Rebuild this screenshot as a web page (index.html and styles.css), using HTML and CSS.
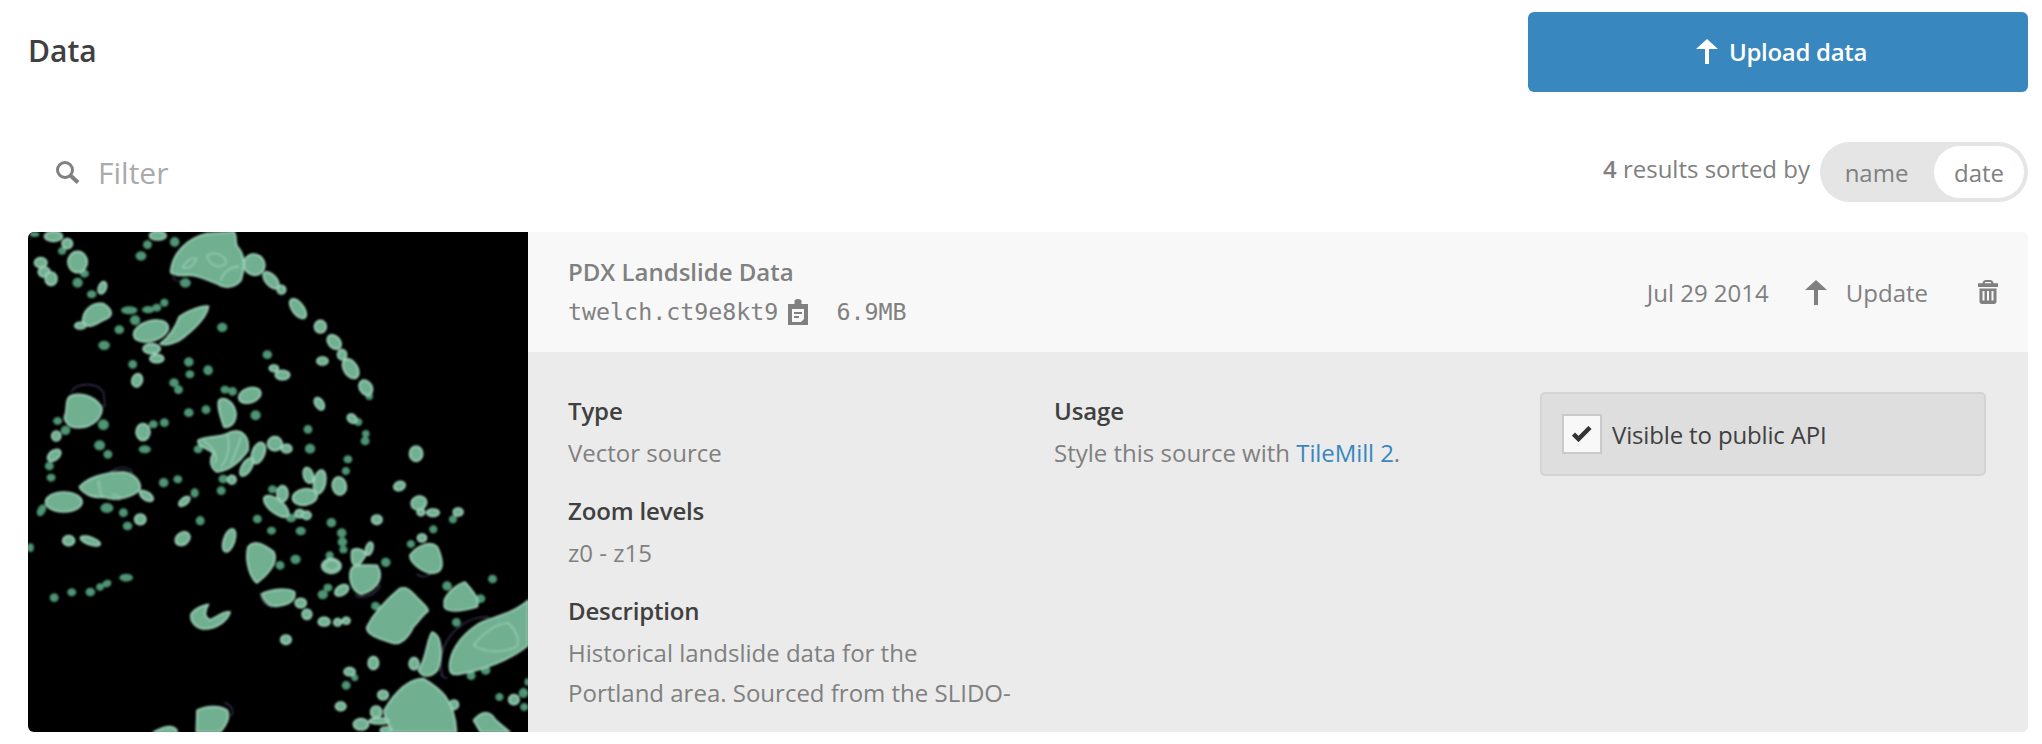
FILE: index.html
```html
<!DOCTYPE html>
<html>
<head>
  <meta http-equiv="content-type" content="text/html; charset=UTF-8">
  <link rel="stylesheet" href="styles.css">
  <title>Data</title>
</head>
<body>
  <div class="page">
    <div class="top">
      <h1 class="title">Data</h1>
      <a class="upload">
        <svg class="arrow-white" viewBox="0 0 22 25"><path d="M11 0 22 10H13V25H9V10H0Z"/></svg>
        Upload data
      </a>
    </div>

    <div class="bar">
      <div class="filter">
        <svg class="search" viewBox="0 0 24 23"><circle cx="9" cy="9" r="7.500"/><path class="handle" d="M14.500 14.500 22 21.500"/></svg>
        <span>Filter</span>
      </div>
      <div class="sort">
        <span class="count"><b>4</b> results sorted by</span>
        <div class="pill">
          <span class="pill-item">name</span>
          <span class="pill-item active">date</span>
        </div>
      </div>
    </div>

    <div class="source">
      <svg class="thumb" viewBox="81 5 1452 1500" preserveAspectRatio="none">
        <defs>
          <filter id="soft" x="-5%" y="-5%" width="110%" height="110%"><feGaussianBlur stdDeviation="2.400"/></filter>
        </defs>
        <rect class="thumb-bg" x="81" y="5" width="1452" height="1500"/>
        <g filter="url(#soft)">
          <g class="lines">
            <path d="M205 485C225 455 280 455 300 485L305 530"/>
            <path d="M320 725C340 710 370 705 385 725"/>
            <path d="M755 1090C760 1115 770 1128 790 1130"/>
            <path d="M1030 1095C1050 1110 1090 1095 1105 1065"/>
            <path d="M1210 1030C1220 1045 1245 1040 1255 1025"/>
            <path d="M1285 1340C1270 1280 1290 1220 1340 1185C1370 1160 1400 1160 1420 1160"/>
            <path d="M1300 1342C1290 1345 1285 1340 1280 1330"/>
            <path d="M650 1418C672 1420 682 1445 670 1458"/>
            <path d="M1065 1190C1090 1135 1130 1105 1165 1080"/>
            <path d="M500 140C510 155 530 155 545 150"/>
          </g>
          <g class="dots">
            <ellipse cx="100" cy="12" rx="12" ry="6"/><ellipse cx="180" cy="62" rx="10" ry="9"/><ellipse cx="225" cy="157" rx="13" ry="13"/>
            <ellipse cx="245" cy="130" rx="11" ry="10"/><ellipse cx="266" cy="192" rx="12" ry="10"/><ellipse cx="428" cy="43" rx="11" ry="11"/>
            <ellipse cx="409" cy="77" rx="14" ry="12"/><ellipse cx="507" cy="35" rx="12" ry="13"/><ellipse cx="538" cy="158" rx="14" ry="12"/>
            <ellipse cx="346" cy="298" rx="12" ry="11"/><ellipse cx="302" cy="345" rx="15" ry="12"/><ellipse cx="375" cy="240" rx="22" ry="10"/>
            <ellipse cx="392" cy="270" rx="13" ry="13"/><ellipse cx="430" cy="238" rx="16" ry="9"/><ellipse cx="455" cy="232" rx="11" ry="10"/>
            <ellipse cx="477" cy="217" rx="10" ry="10"/><ellipse cx="645" cy="291" rx="13" ry="12"/><ellipse cx="385" cy="402" rx="11" ry="11"/>
            <ellipse cx="548" cy="395" rx="12" ry="12"/><ellipse cx="551" cy="432" rx="11" ry="10"/><ellipse cx="604" cy="420" rx="12" ry="13"/>
            <ellipse cx="505" cy="457" rx="12" ry="11"/><ellipse cx="518" cy="478" rx="11" ry="11"/><ellipse cx="776" cy="373" rx="12" ry="11"/>
            <ellipse cx="653" cy="478" rx="11" ry="10"/><ellipse cx="675" cy="483" rx="11" ry="11"/><ellipse cx="548" cy="547" rx="12" ry="11"/>
            <ellipse cx="598" cy="538" rx="11" ry="11"/><ellipse cx="742" cy="555" rx="13" ry="13"/><ellipse cx="477" cy="577" rx="11" ry="11"/>
            <ellipse cx="445" cy="582" rx="11" ry="10"/><ellipse cx="420" cy="657" rx="16" ry="10"/><ellipse cx="313" cy="672" rx="11" ry="11"/>
            <ellipse cx="289" cy="645" rx="14" ry="13"/><ellipse cx="167" cy="572" rx="11" ry="10"/><ellipse cx="190" cy="600" rx="12" ry="12"/>
            <ellipse cx="300" cy="583" rx="14" ry="14"/><ellipse cx="143" cy="707" rx="11" ry="11"/><ellipse cx="148" cy="742" rx="11" ry="10"/>
            <ellipse cx="475" cy="757" rx="12" ry="12"/><ellipse cx="516" cy="747" rx="11" ry="10"/><ellipse cx="565" cy="788" rx="10" ry="12"/>
            <ellipse cx="575" cy="657" rx="11" ry="10"/><ellipse cx="648" cy="746" rx="12" ry="11"/><ellipse cx="642" cy="781" rx="11" ry="11"/>
            <ellipse cx="120" cy="840" rx="10" ry="17" transform="rotate(25 120 840)"/><ellipse cx="310" cy="833" rx="17" ry="13"/><ellipse cx="358" cy="847" rx="11" ry="11"/>
            <ellipse cx="370" cy="887" rx="12" ry="11"/><ellipse cx="581" cy="871" rx="11" ry="12"/><ellipse cx="747" cy="866" rx="11" ry="11"/>
            <ellipse cx="788" cy="901" rx="11" ry="10"/><ellipse cx="873" cy="902" rx="13" ry="11"/><ellipse cx="962" cy="877" rx="12" ry="12"/>
            <ellipse cx="791" cy="777" rx="11" ry="10"/><ellipse cx="845" cy="863" rx="13" ry="11"/><ellipse cx="894" cy="597" rx="11" ry="11"/>
            <ellipse cx="900" cy="655" rx="13" ry="13"/><ellipse cx="1010" cy="687" rx="11" ry="10"/><ellipse cx="1004" cy="722" rx="10" ry="10"/>
            <ellipse cx="1060" cy="632" rx="11" ry="11"/><ellipse cx="1062" cy="610" rx="9" ry="9"/><ellipse cx="1072" cy="498" rx="9" ry="9"/>
            <ellipse cx="1040" cy="575" rx="10" ry="10"/><ellipse cx="992" cy="908" rx="12" ry="12"/><ellipse cx="994" cy="935" rx="12" ry="12"/>
            <ellipse cx="997" cy="958" rx="10" ry="9"/><ellipse cx="957" cy="975" rx="10" ry="10"/><ellipse cx="813" cy="1005" rx="11" ry="11"/>
            <ellipse cx="858" cy="987" rx="13" ry="12"/><ellipse cx="1120" cy="996" rx="12" ry="12"/><ellipse cx="1193" cy="941" rx="10" ry="10"/>
            <ellipse cx="1258" cy="897" rx="10" ry="10"/><ellipse cx="1315" cy="867" rx="10" ry="10"/><ellipse cx="1430" cy="1046" rx="11" ry="11"/>
            <ellipse cx="1298" cy="1067" rx="12" ry="12"/><ellipse cx="1395" cy="1105" rx="12" ry="11"/><ellipse cx="1325" cy="1176" rx="11" ry="11"/>
            <ellipse cx="1090" cy="1127" rx="11" ry="11"/><ellipse cx="952" cy="1072" rx="11" ry="10"/><ellipse cx="937" cy="1093" rx="13" ry="12"/>
            <ellipse cx="157" cy="1102" rx="11" ry="11"/><ellipse cx="208" cy="1086" rx="11" ry="10"/><ellipse cx="262" cy="1085" rx="12" ry="11"/>
            <ellipse cx="290" cy="1070" rx="9" ry="9"/><ellipse cx="310" cy="1060" rx="12" ry="9" transform="rotate(-30 310 1060)"/><ellipse cx="366" cy="1042" rx="18" ry="10"/>
            <ellipse cx="88" cy="952" rx="8" ry="11"/><ellipse cx="1005" cy="1365" rx="11" ry="11"/><ellipse cx="1030" cy="1342" rx="8" ry="8"/>
            <ellipse cx="1450" cy="1400" rx="10" ry="10"/><ellipse cx="1520" cy="1388" rx="12" ry="13"/><ellipse cx="1522" cy="1430" rx="10" ry="10"/>
            <ellipse cx="1368" cy="1336" rx="11" ry="11"/><ellipse cx="1410" cy="1320" rx="12" ry="11"/><ellipse cx="1530" cy="1355" rx="5" ry="9"/>
          </g>
          <g class="blobs">
            <ellipse cx="155" cy="18" rx="26" ry="15"/><ellipse cx="195" cy="40" rx="15" ry="15"/><ellipse cx="225" cy="95" rx="28" ry="32"/>
            <ellipse cx="118" cy="97" rx="18" ry="15"/><ellipse cx="128" cy="125" rx="17" ry="15"/><ellipse cx="148" cy="145" rx="17" ry="20"/>
            <ellipse cx="458" cy="16" rx="24" ry="13"/><ellipse cx="297" cy="172" rx="11" ry="19" transform="rotate(20 297 172)"/>
            <path d="M495 125C500 70 540 25 600 10L680 5C690 25 680 40 690 50C710 70 712 110 700 150C680 175 650 175 630 160C600 150 570 130 540 135C520 135 500 135 495 125Z"/>
            <ellipse cx="738" cy="103" rx="30" ry="32" transform="rotate(-30 738 103)"/><ellipse cx="787" cy="150" rx="30" ry="16" transform="rotate(50 787 150)"/><ellipse cx="817" cy="178" rx="12" ry="13"/>
            <ellipse cx="865" cy="235" rx="34" ry="17" transform="rotate(55 865 235)"/><ellipse cx="930" cy="289" rx="17" ry="19"/><ellipse cx="970" cy="335" rx="24" ry="17" transform="rotate(50 970 335)"/>
            <ellipse cx="993" cy="373" rx="13" ry="15"/><ellipse cx="936" cy="392" rx="16" ry="12"/><ellipse cx="1018" cy="415" rx="32" ry="20" transform="rotate(60 1018 415)"/>
            <ellipse cx="1062" cy="472" rx="24" ry="18" transform="rotate(60 1062 472)"/><ellipse cx="927" cy="520" rx="20" ry="12" transform="rotate(60 927 520)"/><ellipse cx="1022" cy="565" rx="15" ry="12" transform="rotate(45 1022 565)"/>
            <path d="M240 265C245 235 270 215 300 220C325 235 330 255 310 265C290 270 270 295 250 285C240 280 238 275 240 265Z"/>
            <ellipse cx="233" cy="286" rx="16" ry="10"/>
            <ellipse cx="438" cy="302" rx="52" ry="30" transform="rotate(-18 438 302)"/>
            <path d="M465 340C490 320 510 290 520 260C545 240 590 225 605 228C600 260 570 290 540 315C520 335 480 350 465 340Z"/>
            <ellipse cx="440" cy="355" rx="25" ry="15"/><ellipse cx="455" cy="385" rx="20" ry="12"/><ellipse cx="398" cy="450" rx="15" ry="20" transform="rotate(15 398 450)"/>
            <ellipse cx="795" cy="414" rx="13" ry="10"/><ellipse cx="820" cy="434" rx="21" ry="14"/>
            <path d="M200 500C220 485 270 490 295 530C300 560 270 590 230 592C200 595 180 570 190 550C195 530 190 510 200 500Z"/>
            <ellipse cx="163" cy="617" rx="13" ry="15"/><ellipse cx="415" cy="605" rx="20" ry="25"/><ellipse cx="157" cy="675" rx="22" ry="14" transform="rotate(-40 157 675)"/>
            <path d="M635 510C650 495 680 515 685 550C685 580 665 595 650 590C640 560 630 530 635 510Z"/>
            <ellipse cx="725" cy="495" rx="33" ry="22" transform="rotate(-20 725 495)"/>
            <path d="M575 630C600 615 640 625 670 605C700 595 725 615 720 660C700 690 670 720 630 725C605 710 610 680 620 670C600 650 570 650 575 630Z"/>
            <ellipse cx="750" cy="668" rx="18" ry="33" transform="rotate(20 750 668)"/><ellipse cx="798" cy="640" rx="21" ry="21"/><ellipse cx="832" cy="655" rx="15" ry="13"/>
            <ellipse cx="716" cy="710" rx="14" ry="30" transform="rotate(30 716 710)"/><ellipse cx="673" cy="748" rx="12" ry="13"/>
            <ellipse cx="1208" cy="670" rx="19" ry="23"/><ellipse cx="1160" cy="767" rx="17" ry="13" transform="rotate(-25 1160 767)"/>
            <path d="M230 770C250 745 300 725 360 725C395 730 412 760 405 780C380 800 340 815 300 800C270 805 240 790 230 770Z"/>
            <ellipse cx="185" cy="815" rx="53" ry="30"/><ellipse cx="425" cy="797" rx="22" ry="12" transform="rotate(35 425 797)"/>
            <ellipse cx="535" cy="813" rx="19" ry="10" transform="rotate(-40 535 813)"/><ellipse cx="407" cy="867" rx="16" ry="16"/>
            <ellipse cx="199" cy="931" rx="17" ry="15"/><ellipse cx="262" cy="932" rx="30" ry="11" transform="rotate(20 262 932)"/>
            <ellipse cx="530" cy="925" rx="23" ry="18" transform="rotate(-40 530 925)"/><ellipse cx="665" cy="930" rx="16" ry="36" transform="rotate(18 665 930)"/>
            <ellipse cx="895" cy="735" rx="14" ry="24" transform="rotate(-15 895 735)"/><ellipse cx="928" cy="755" rx="17" ry="36" transform="rotate(10 928 755)"/>
            <ellipse cx="985" cy="767" rx="20" ry="27" transform="rotate(-10 985 767)"/><ellipse cx="885" cy="800" rx="36" ry="24" transform="rotate(-10 885 800)"/>
            <ellipse cx="820" cy="790" rx="16" ry="24"/><ellipse cx="802" cy="828" rx="44" ry="20" transform="rotate(40 802 828)"/><ellipse cx="870" cy="850" rx="14" ry="12"/><ellipse cx="890" cy="855" rx="13" ry="12"/>
            <ellipse cx="1216" cy="818" rx="23" ry="20" transform="rotate(-30 1216 818)"/><ellipse cx="1222" cy="846" rx="11" ry="10"/><ellipse cx="1257" cy="847" rx="18" ry="11"/>
            <ellipse cx="1330" cy="845" rx="14" ry="12"/><ellipse cx="1094" cy="868" rx="15" ry="14"/><ellipse cx="1225" cy="923" rx="13" ry="12"/>
            <path d="M720 950C740 925 770 945 795 965C810 1000 770 1040 745 1058C725 1040 710 990 720 950Z"/>
            <path d="M760 1090C790 1075 840 1072 855 1085C860 1110 840 1125 800 1128C780 1128 765 1110 760 1090Z"/>
            <ellipse cx="873" cy="1118" rx="16" ry="14"/><ellipse cx="891" cy="1152" rx="14" ry="15"/><ellipse cx="941" cy="1174" rx="17" ry="13"/><ellipse cx="980" cy="1176" rx="11" ry="11"/><ellipse cx="1005" cy="1171" rx="11" ry="10"/><ellipse cx="830" cy="1228" rx="15" ry="14"/>
            <path d="M555 1150C570 1130 590 1125 605 1122C595 1140 590 1160 610 1168C630 1160 650 1140 668 1145C660 1175 620 1200 585 1195C565 1190 550 1170 555 1150Z"/>
            <ellipse cx="962" cy="1007" rx="28" ry="22"/>
            <path d="M1022 960C1040 950 1060 960 1062 975C1050 995 1040 1010 1030 1005C1020 1000 1018 975 1022 960Z"/>
            <ellipse cx="1072" cy="955" rx="10" ry="20" transform="rotate(15 1072 955)"/>
            <path d="M1020 1015C1030 1000 1060 1005 1095 1005C1115 1040 1100 1075 1050 1092C1020 1085 1010 1040 1020 1015Z"/>
            <ellipse cx="992" cy="1080" rx="22" ry="14" transform="rotate(-35 992 1080)"/>
            <path d="M1065 1190C1085 1150 1125 1105 1160 1075C1180 1065 1195 1085 1205 1095C1220 1115 1245 1130 1243 1142C1225 1155 1215 1175 1200 1190C1185 1225 1160 1245 1140 1238C1110 1228 1060 1215 1065 1190Z"/>
            <path d="M1190 975C1210 945 1250 930 1270 950C1285 985 1290 1015 1270 1025C1240 1040 1190 1000 1190 975Z"/>
            <path d="M1290 1110C1300 1085 1330 1060 1350 1055C1370 1080 1395 1105 1385 1130C1350 1140 1300 1150 1290 1130Z"/>
            <path d="M1305 1310C1305 1270 1330 1220 1390 1180C1430 1160 1490 1150 1533 1110V1245C1480 1290 1400 1320 1330 1332C1310 1335 1305 1325 1305 1310Z"/>
            <path d="M1215 1320C1240 1280 1240 1220 1255 1205C1285 1215 1285 1280 1270 1320C1250 1345 1225 1340 1215 1320Z"/>
            <ellipse cx="1202" cy="1300" rx="14" ry="18"/><ellipse cx="1084" cy="1298" rx="15" ry="19"/><ellipse cx="1015" cy="1324" rx="16" ry="12"/>
            <ellipse cx="1112" cy="1394" rx="15" ry="14"/><ellipse cx="989" cy="1428" rx="15" ry="13"/><ellipse cx="1318" cy="1423" rx="13" ry="14"/><ellipse cx="1492" cy="1408" rx="15" ry="15"/>
            <path d="M1115 1440C1150 1380 1190 1345 1230 1345C1270 1370 1320 1400 1325 1505H1140C1125 1480 1115 1460 1115 1440Z"/>
            <ellipse cx="1092" cy="1445" rx="16" ry="18"/><ellipse cx="1048" cy="1482" rx="22" ry="17"/><ellipse cx="1100" cy="1472" rx="28" ry="9"/><ellipse cx="1120" cy="1500" rx="16" ry="10"/>
            <path d="M570 1505 572 1440C600 1425 640 1425 660 1440C670 1470 650 1490 640 1505Z"/>
            <path d="M445 1505C465 1495 490 1480 510 1495L515 1505Z"/>
            <path d="M1375 1470C1395 1445 1420 1435 1440 1470L1480 1505H1395Z"/>
          </g>
          <g class="rims">
            <path d="M600 75C630 60 660 80 655 100C640 115 610 110 600 75ZM530 110C540 90 560 80 570 85C565 105 545 118 530 110ZM640 150C650 120 680 105 695 110"/>
            <path d="M285 750C290 775 290 795 300 805M325 795C340 790 350 795 345 810"/>
            <path d="M590 630C620 650 640 690 620 700M660 615C670 650 660 690 640 710M700 620C690 650 680 680 670 700"/>
            <path d="M1375 1245C1400 1210 1440 1180 1475 1178C1500 1200 1510 1230 1500 1250C1470 1265 1410 1270 1375 1245Z"/>
            <path d="M940 1005C955 985 975 985 985 1005C975 1025 950 1025 940 1005Z"/>
          </g>
        </g>
      </svg>

      <div class="panel">
        <div class="head">
          <div class="head-info">
            <div class="name">PDX Landslide Data</div>
            <div class="meta">
              <span class="mono">twelch.ct9e8kt9</span>
              <svg class="clip" viewBox="0 0 20 26">
                <path d="M0 5H6.500V2C6.500 1 7.500 0 10 0S13.500 1 13.500 2V5H20V26H0Z"/>
                <path class="clip-paper" d="M4 10H16V20L13 23H4Z"/>
                <path d="M6 13H14V15H6ZM6 17H11V19H6Z"/>
              </svg>
              <span class="mono size">6.9MB</span>
            </div>
          </div>
          <div class="head-actions">
            <span>Jul 29 2014</span>
            <svg class="arrow-grey" viewBox="0 0 22 25"><path d="M11 0 22 10H13V25H9V10H0Z"/></svg>
            <span class="update">Update</span>
            <svg class="trash" viewBox="0 0 20 24"><path fill-rule="evenodd" d="M4.500 3.200C5 1 6 0 8 0H12C14 0 15 1 15.500 3.200H20V7H0V3.200ZM6.800 3.200H13.200C13 2.300 12.700 2 12 2H8C7.300 2 7 2.300 6.800 3.200ZM1.500 8.500H18.500V21.500C18.500 23 17.500 24 16 24H4C2.500 24 1.500 23 1.500 21.500ZM4.500 11V20.500H6.500V11ZM9 11V20.500H11V11ZM13.500 11V20.500H15.500V11Z"/></svg>
          </div>
        </div>
        <div class="body">
          <div class="col">
            <div class="field">
              <h3 class="label">Type</h3>
              <p class="value">Vector source</p>
            </div>
            <div class="field">
              <h3 class="label">Zoom levels</h3>
              <p class="value">z0 - z15</p>
            </div>
            <div class="field">
              <h3 class="label">Description</h3>
              <p class="value">Historical landslide data for the Portland area. Sourced from the SLIDO-</p>
            </div>
          </div>
          <div class="col">
            <div class="field">
              <h3 class="label">Usage</h3>
              <p class="value">Style this source with <a class="link">TileMill 2</a>.</p>
            </div>
          </div>
          <label class="visible">
            <span class="checkbox">
              <svg viewBox="0 0 20 16"><path d="M1.500 8 6.500 13 18 1.500"/></svg>
            </span>
            Visible to public API
          </label>
        </div>
      </div>
    </div>
  </div>
</body>
</html>
```

FILE: styles.css
```css
* {
  box-sizing: border-box;
}

body {
  margin: 0;
  background: #fff;
  color: #808080;
  font-family: "Open Sans", sans-serif;
  font-size: 24px;
}

.page {
  padding: 12px 14px 0 28px;
}

.top {
  display: flex;
  justify-content: space-between;
  align-items: center;
}

.title {
  margin: 0 0 3px;
  color: #404040;
  font-size: 30px;
  font-weight: 600;
}

.upload {
  display: flex;
  justify-content: center;
  align-items: center;
  gap: 11px;
  width: 500px;
  height: 80px;
  padding: 0 0 2px 7px;
  border-radius: 6px;
  background: #3887be;
  color: #fff;
  font-weight: 600;
  letter-spacing: -0.3px;
}

.arrow-white {
  width: 22px;
  height: 25px;
  fill: #fff;
}

.bar {
  display: flex;
  justify-content: space-between;
  align-items: center;
  margin: 50px 0 30px;
}

.filter {
  display: flex;
  align-items: center;
  gap: 18px;
  padding-left: 28px;
  color: #aaa;
  font-size: 30px;
}

.search {
  width: 24px;
  height: 23px;
  fill: none;
  stroke: #808080;
  stroke-width: 3;
}

.handle {
  stroke-width: 4;
}

.sort {
  display: flex;
  align-items: center;
  gap: 10px;
}

.count {
  margin-top: -8px;
}

.count b {
  font-weight: 600;
}

.pill {
  display: flex;
  height: 60px;
  padding: 4px;
  border-radius: 30px;
  background: #e5e5e5;
}

.pill-item {
  display: flex;
  align-items: center;
  justify-content: center;
  width: 110px;
  padding: 0 5px 0 0;
  border-radius: 26px;
}

.pill-item.active {
  width: 90px;
  padding: 0;
  background: #fff;
}

.source {
  display: flex;
  height: 500px;
}

.thumb {
  flex: none;
  width: 500px;
  height: 500px;
  border-radius: 6px 0 0 6px;
}

.thumb-bg {
  fill: #000;
}

.dots {
  fill: #4f9574;
  stroke: #4f9574;
  stroke-width: 4;
}

.blobs {
  fill: #6fb091;
  stroke: #a2d5bc;
  stroke-width: 5;
  stroke-linejoin: round;
}

.rims {
  fill: none;
  stroke: #a5d3bc;
  stroke-width: 3;
}

.lines {
  fill: none;
  stroke: #3a3357;
  stroke-width: 4;
}

.panel {
  flex: 1;
  display: flex;
  flex-direction: column;
  overflow: hidden;
  border-radius: 0 6px 6px 0;
  background: #ebebeb;
}

.head {
  display: flex;
  justify-content: space-between;
  align-items: center;
  height: 120px;
  padding: 0 30px 0 40px;
  background: #f8f8f8;
}

.name {
  font-weight: 600;
  line-height: 40px;
}

.meta {
  display: flex;
  align-items: center;
  line-height: 40px;
}

.mono {
  font-family: "DejaVu Sans Mono", monospace;
  font-size: 23.300px;
}

.clip {
  width: 20px;
  height: 26px;
  margin-left: 10px;
  fill: #808080;
}

.clip-paper {
  fill: #f8f8f8;
}

.size {
  margin-left: 28px;
}

.head-actions {
  display: flex;
  align-items: center;
}

.arrow-grey {
  width: 22px;
  height: 25px;
  margin-left: 36px;
  fill: #808080;
}

.update {
  margin-left: 19px;
}

.trash {
  width: 20px;
  height: 24px;
  margin-left: 50px;
  fill: #808080;
}

.body {
  flex: 1;
  display: flex;
  padding: 39px 41px 0 40px;
}

.col {
  flex: none;
  width: 486px;
}

.field {
  margin-bottom: 18px;
}

.label {
  margin: 0;
  color: #404040;
  font-size: 24px;
  font-weight: 600;
  line-height: 40px;
  letter-spacing: -0.150px;
}

.value {
  width: 445px;
  margin: 2px 0 0;
  line-height: 40px;
}

.link {
  color: #3887be;
  letter-spacing: -0.100px;
}

.visible {
  display: flex;
  align-items: center;
  gap: 10px;
  width: 446px;
  height: 84px;
  margin-top: 1px;
  padding-left: 20px;
  border: 2px solid #d4d4d4;
  border-radius: 5px;
  background: #dedede;
  color: #404040;
  letter-spacing: -0.150px;
}

.checkbox {
  display: flex;
  align-items: center;
  justify-content: center;
  width: 40px;
  height: 40px;
  border: 2px solid #cacaca;
  background: #f8f8f8;
}

.checkbox svg {
  width: 20px;
  height: 16px;
  fill: none;
  stroke: #333;
  stroke-width: 4.500;
}
```
